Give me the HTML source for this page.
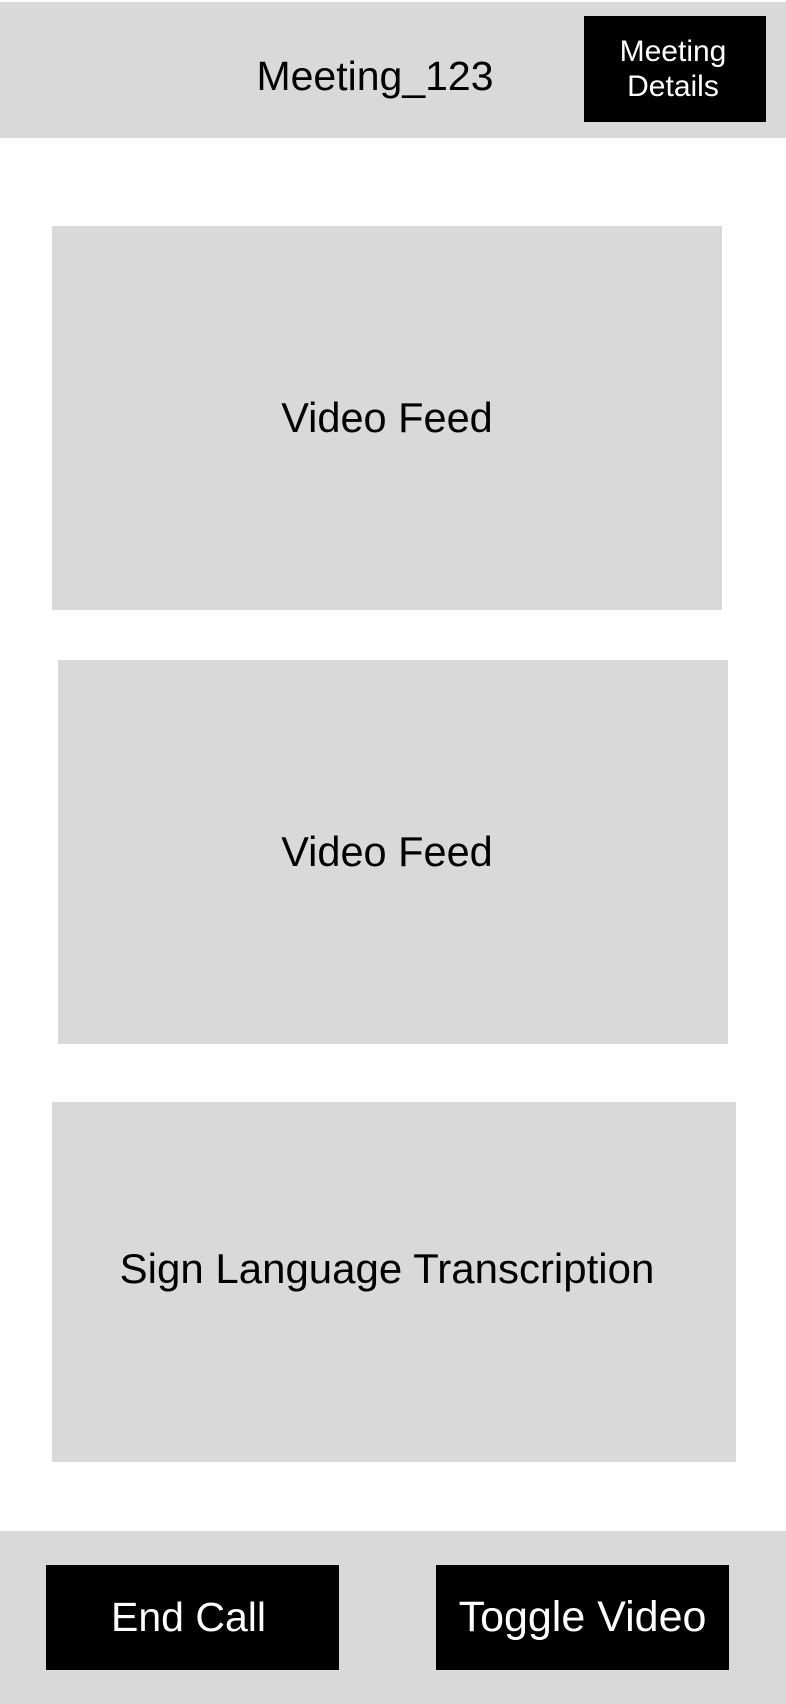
<!DOCTYPE html>
<html><head><meta charset="utf-8"><style>
*{margin:0;padding:0;box-sizing:border-box}
body{width:786px;height:1704px;background:#fff;font-family:"Liberation Sans",sans-serif;position:relative;overflow:hidden;color:#000}
.b{position:absolute;display:flex;align-items:center;justify-content:center;text-align:center}
.g{background:#d9d9d9}
.k{background:#000;color:#fff}
</style></head><body>
<div class="b g" style="left:0;top:2px;width:786px;height:136px"></div>
<div class="b" style="left:200px;top:40px;width:350px;height:72px;font-size:41px">Meeting_123</div>
<div class="b k" style="left:584px;top:16px;width:182px;height:106px;font-size:30px;line-height:35px;padding-right:4px">Meeting<br>Details</div>
<div class="b g" style="left:52px;top:226px;width:670px;height:384px;font-size:41.5px">Video Feed</div>
<div class="b g" style="left:58px;top:660px;width:670px;height:384px;font-size:41.5px;padding-right:12px">Video Feed</div>
<div class="b g" style="left:52px;top:1102px;width:684px;height:360px;font-size:42px;padding-right:14px;padding-bottom:26px">Sign Language Transcription</div>
<div class="b g" style="left:0;top:1531px;width:786px;height:173px"></div>
<div class="b k" style="left:46px;top:1565px;width:293px;height:105px;font-size:41px;padding-right:8px">End Call</div>
<div class="b k" style="left:436px;top:1565px;width:293px;height:105px;font-size:43px">Toggle Video</div>
</body></html>
